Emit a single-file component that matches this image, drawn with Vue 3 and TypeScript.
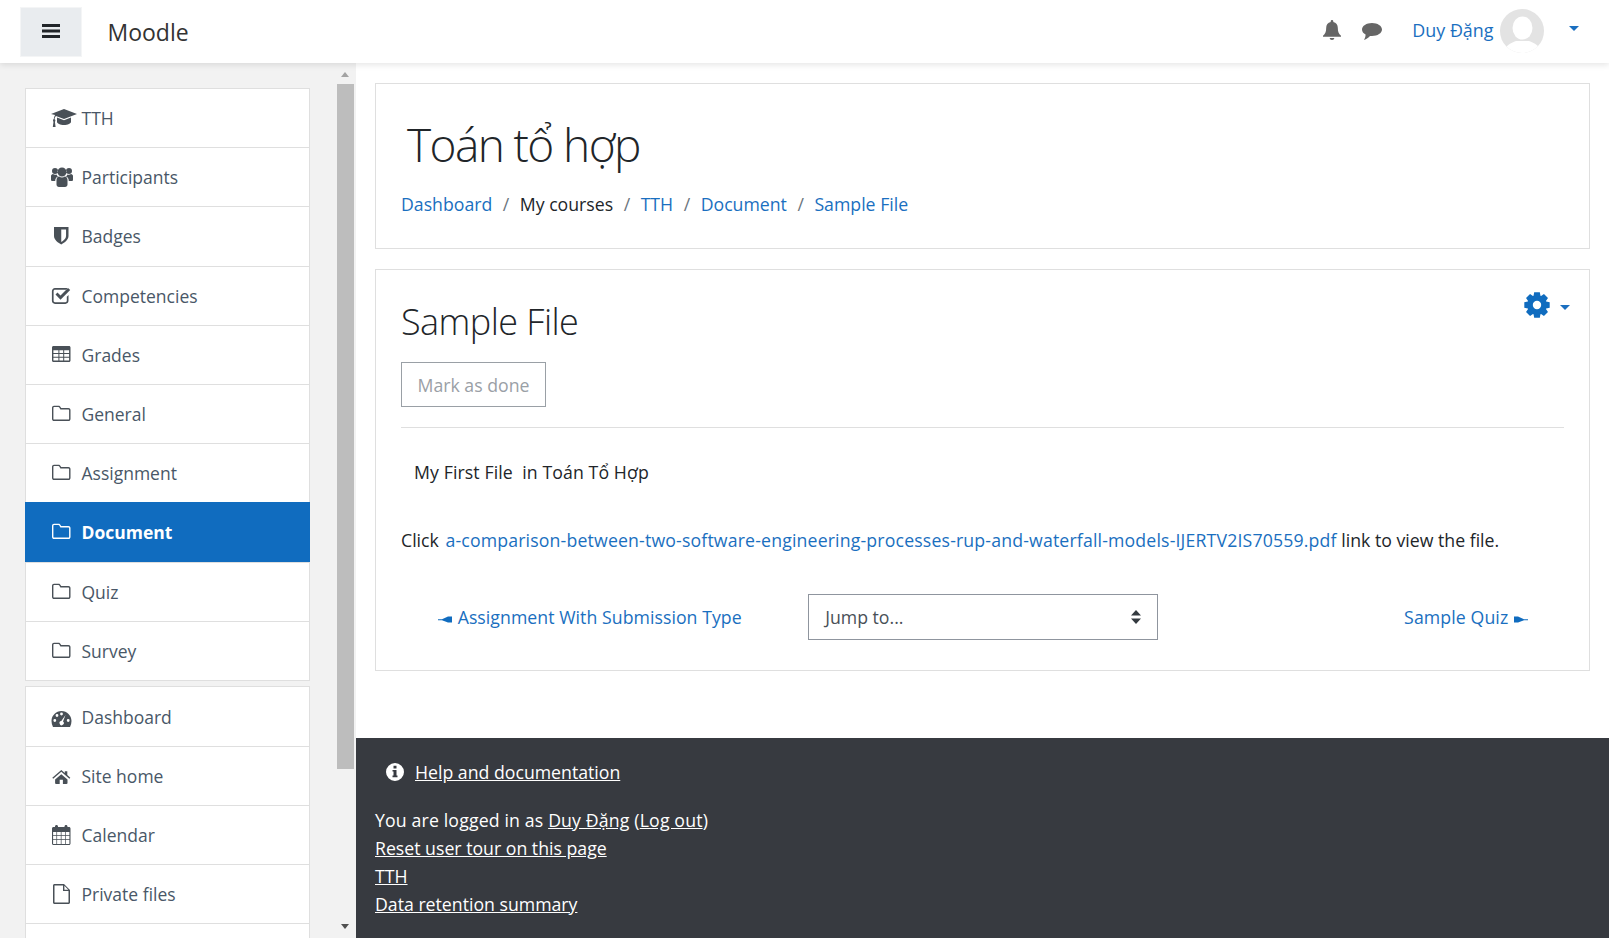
<template>
  <div class="page">
    <header class="navbar">
      <button class="nav-toggle" type="button">
        <svg class="bars" viewBox="0 0 18 14"><path d="M0 0h18v3H0zM0 5.500h18v3H0zM0 11h18v3H0z" /></svg>
      </button>
      <div class="brand">Moodle</div>
      <div class="navbar-right">
        <svg class="bell" viewBox="0 0 18 20"><path d="M9 0c.8 0 1.300.6 1.300 1.300v.6c2.900.6 4.500 3 4.500 5.800 0 4 .9 5.800 3.200 8.100v1H0v-1c2.300-2.300 3.200-4.100 3.200-8.100 0-2.800 1.600-5.200 4.500-5.800v-.6C7.700.6 8.200 0 9 0zM6.700 18h4.600c0 1.200-1 2-2.300 2s-2.300-.8-2.300-2z" /></svg>
        <svg class="chat" viewBox="0 0 20 17"><path d="M10 0c5.500 0 10 2.900 10 6.500S15.500 13 10 13c-.7 0-1.400 0-2-.1C6.500 14.500 4.500 16 2 17c.9-1.300 1.500-3 1.600-5.400C1.400 10.400 0 8.600 0 6.500 0 2.900 4.500 0 10 0z" /></svg>
        <span class="user-name">Duy Đặng</span>
        <svg class="avatar" viewBox="0 0 44 44">
          <defs><clipPath id="avatar-clip"><circle cx="22" cy="22" r="22" /></clipPath></defs>
          <g clip-path="url(#avatar-clip)">
            <rect width="44" height="44" fill="#e3e3e3" />
            <ellipse cx="22.500" cy="19" rx="10" ry="11.500" fill="#fff" />
            <path d="M3 44c1-7 8-10 13-12h13c5 2 12 5 13 12z" fill="#fff" />
          </g>
        </svg>
        <span class="caret user-caret"></span>
      </div>
    </header>

    <div class="layout">
      <aside class="drawer">
        <div class="drawer-lists">
          <nav v-for="(group, groupIndex) in navGroups" :key="groupIndex" class="list-group">
            <div v-for="item in group" :key="item.label" class="list-item" :class="{ active: item.active }">
              <svg v-if="item.icon" class="item-icon" viewBox="0 0 26 26"><path fill-rule="evenodd" :d="icons[item.icon]" /></svg>
              <span>{{ item.label }}</span>
            </div>
          </nav>
        </div>
        <div class="rail">
          <span class="rail-arrow up"></span>
          <div class="rail-thumb"></div>
          <span class="rail-arrow down"></span>
        </div>
      </aside>

      <main class="main">
        <section class="card head-card">
          <h1>Toán tổ hợp</h1>
          <ol class="crumbs">
            <li><a>Dashboard</a></li>
            <li class="sep">/</li>
            <li>My courses</li>
            <li class="sep">/</li>
            <li><a>TTH</a></li>
            <li class="sep">/</li>
            <li><a>Document</a></li>
            <li class="sep">/</li>
            <li><a>Sample File</a></li>
          </ol>
        </section>

        <section class="card content-card">
          <div class="action-menu">
            <svg class="gear" viewBox="0 0 26 26"><path fill-rule="evenodd" :d="gearPath" /></svg>
            <span class="caret"></span>
          </div>
          <h2>Sample File</h2>
          <button class="done-btn" type="button">Mark as done</button>
          <hr />
          <p class="intro">My First File&nbsp; in Toán Tổ Hợp</p>
          <p class="file-line">Click <a class="file-link">a-comparison-between-two-software-engineering-processes-rup-and-waterfall-models-IJERTV2IS70559.pdf</a> link to view the file.</p>
          <div class="jump-row">
            <a class="prev-link">
              <svg class="flag" viewBox="0 0 15 9"><path d="M0 4.200h4L10 1.500h4v6h-4L4 5.200H0z" /></svg>
              Assignment With Submission Type
            </a>
            <div class="jump-cell">
              <div class="jump-select">
                <span>Jump to...</span>
                <svg class="updown" viewBox="0 0 10 14"><path d="M5 0 10 5.500H0zM0 8.500h10L5 14z" /></svg>
              </div>
            </div>
            <a class="next-link">
              Sample Quiz
              <svg class="flag" viewBox="0 0 15 9"><path d="M15 4.200h-4L5 1.500H1v6h4l6-2.300h4z" /></svg>
            </a>
          </div>
        </section>

        <footer class="footer">
          <div class="help">
            <svg class="info" viewBox="0 0 18 18"><path fill-rule="evenodd" d="M9 0a9 9 0 1 1 0 18A9 9 0 0 1 9 0zM7.500 2.800v2.600h3V2.800zM6.500 7v1.600h1v4H6.500v1.600h5v-1.600h-1V7z" /></svg>
            <a>Help and documentation</a>
          </div>
          <div class="login-info">
            <div class="logged-in">You are logged in as <a>Duy Đặng</a> (<a>Log out</a>)</div>
            <div><a>Reset user tour on this page</a></div>
            <div><a>TTH</a></div>
            <div><a>Data retention summary</a></div>
          </div>
        </footer>
      </main>
    </div>
  </div>
</template>

<script setup lang="ts">
type NavItem = { label: string; icon?: string; active?: boolean };

function circle(cx: number, cy: number, r: number) {
  return `M${cx - r} ${cy}a${r} ${r} 0 1 0 ${2 * r} 0a${r} ${r} 0 1 0 ${-2 * r} 0z`;
}

function rect(x0: number, y0: number, x1: number, y1: number) {
  return `M${x0} ${y0}H${x1}V${y1}H${x0}z`;
}

function grid(cols: number[][], rows: number[][]) {
  return cols.flatMap((c) => rows.map((r) => rect(c[0], r[0], c[1], r[1]))).join('');
}

function makeGear() {
  const cx = 13;
  const cy = 13;
  const teeth = 8;
  let d = '';
  for (let i = 0; i < teeth; i++) {
    const a = (i * Math.PI * 2) / teeth - Math.PI / 2;
    const pts = [
      [a - 0.36, 9.8],
      [a - 0.22, 13],
      [a + 0.22, 13],
      [a + 0.36, 9.8],
    ];
    for (const [t, r] of pts) {
      d += `${d ? 'L' : 'M'}${(cx + Math.cos(t) * r).toFixed(2)} ${(cy + Math.sin(t) * r).toFixed(2)}`;
    }
  }
  return d + 'z' + circle(13, 13, 4.2);
}

const gearPath = makeGear();

const folder =
  'M3 4.700h4.500c1 0 1.500.5 2 1.200l.7 1.100h7.300c1.100 0 2 .9 2 2v8.900c0 1.200-.9 2.100-2 2.100H3c-1.100 0-2-.9-2-2.100V6.700c0-1.100.9-2 2-2z' +
  'M3 6.100c-.3 0-.6.3-.6.6v11.200c0 .4.3.7.6.7h14.500c.3 0 .6-.3.6-.7V9c0-.3-.3-.6-.6-.6H9.400L8.300 6.600c-.2-.3-.5-.5-.8-.5z';

const icons: Record<string, string> = {
  cap:
    'M13 4 26 9 13 14 5 11c-1 .8-1.300 2-1.400 3.200.5.3.8.8.8 1.300 0 .5-.2.9-.5 1.200l.7 5.300H1.800l.7-5.300c-.3-.3-.5-.7-.5-1.200 0-.6.3-1.100.8-1.400.1-1.500.5-3 1.300-4.100L0 9z' +
    'M6 12.500l7 2.700 7-2.700v4.300c0 1.900-3.200 3.200-7 3.200s-7-1.300-7-3.200z',
  users:
    circle(11, 8, 4.5) + circle(4, 7, 3) + circle(18, 7, 3) +
    'M5.500 16c0-2 1.200-3.500 2.700-3.500.8.7 1.700 1 2.800 1s2-.3 2.800-1c1.500 0 2.700 1.500 2.700 3.500v4.500c0 1.600-1 2.500-2.500 2.500H8c-1.500 0-2.500-.9-2.500-2.500z' +
    'M0 12c0-1 1-2 2-2 .6.5 1.300.8 2.200.8.5 0 1-.1 1.400-.3.3 1 .8 1.400 1.500 2-1.700.5-2.900 2-2.900 4.500H1.500C.5 17 0 16.500 0 15.500z' +
    'M22 12c0-1-1-2-2-2-.6.5-1.300.8-2.200.8-.5 0-1-.1-1.400-.3-.3 1-.8 1.400-1.500 2 1.700.5 2.900 2 2.900 4.500h2.700c1 0 1.500-.5 1.500-1.500z',
  shield: 'M3 4h14.500v9c0 4-4.500 7-7.250 8.500C7.500 20 3 17 3 13zM10.250 6.500v12.500c2-1.200 4.800-3.200 4.800-6V6.500z',
  check:
    'M4 5h11c.5 0 1 .1 1.400.3l-1.400 1.500H4c-.8 0-1.400.6-1.400 1.400v9.600c0 .8.6 1.400 1.400 1.400h10.400c.8 0 1.400-.6 1.400-1.400v-4l1.700-1.700v5.700c0 1.700-1.400 3.100-3.100 3.100H4c-1.700 0-3.100-1.400-3.100-3.100V8.100C.9 6.400 2.300 5 4 5z' +
    'M4.500 11.500l2-2 3 3 7.500-7.500 2.200 2-9.700 9.700z',
  table:
    'M2.500 4h15.500c.9 0 1.500.6 1.500 1.500v13c0 .9-.6 1.500-1.500 1.500H2.500c-.9 0-1.500-.6-1.500-1.500v-13C1 4.600 1.600 4 2.500 4z' +
    grid([[2.4, 7.4], [8.4, 12.2], [13.2, 18.1]], [[8.2, 10.9], [12, 14.7], [15.8, 18.6]]),
  folder,
  gauge:
    'M10.500 7C16 7 20.500 11.500 20.500 17c0 2-.5 4-1.500 6H2C1 21 .5 19 .5 17 .5 11.500 5 7 10.500 7z' +
    circle(3.8, 16.500, 1.4) + circle(6, 11.500, 1.4) + circle(10.500, 10, 1.4) + circle(17.200, 16.500, 1.4) +
    'M14.500 11l-2.500 6.500a2.100 2.100 0 1 1-1.700-.5z',
  home:
    'M10.300 7 13.800 10V8.200h2.500v3.900l3 2.600-.9 1-8.100-6.900-8.100 6.900-.9-1z' +
    'M10.300 11.300l6.200 5.200v3.600c0 .5-.4.9-.9.9h-3.700v-4.200H8.700V21H5c-.5 0-.9-.4-.9-.9v-3.600z',
  calendar:
    'M2.500 5H4V4.500c0-.9.6-1.500 1.500-1.500S7 3.600 7 4.500V5h6.500v-.5c0-.9.6-1.500 1.500-1.500s1.500.6 1.500 1.500V5H18c.9 0 1.500.6 1.500 1.500v15c0 .9-.6 1.500-1.500 1.500H2.500C1.600 23 1 22.400 1 21.500v-15C1 5.600 1.600 5 2.500 5z' +
    grid([[2.1, 5.400], [6.100, 9.800], [10.500, 14.100], [14.800, 18.400]], [[10.100, 13], [13.700, 17], [17.700, 21.900]]),
  file:
    'M3.500 3H13l6 6v12.500c0 .8-.7 1.500-1.500 1.500h-14C2.700 23 2 22.300 2 21.500v-17C2 3.700 2.700 3 3.500 3z' +
    'M3.500 4.500v17h14V10H12V4.500zM13.400 4.800V8.700h3.900z',
};

const navGroups: NavItem[][] = [
  [
    { label: 'TTH', icon: 'cap' },
    { label: 'Participants', icon: 'users' },
    { label: 'Badges', icon: 'shield' },
    { label: 'Competencies', icon: 'check' },
    { label: 'Grades', icon: 'table' },
    { label: 'General', icon: 'folder' },
    { label: 'Assignment', icon: 'folder' },
    { label: 'Document', icon: 'folder', active: true },
    { label: 'Quiz', icon: 'folder' },
    { label: 'Survey', icon: 'folder' },
  ],
  [
    { label: 'Dashboard', icon: 'gauge' },
    { label: 'Site home', icon: 'home' },
    { label: 'Calendar', icon: 'calendar' },
    { label: 'Private files', icon: 'file' },
    { label: '' },
  ],
];
</script>

<style>
html,
body {
  margin: 0;
  overflow: hidden;
}
</style>

<style scoped>
.page {
  width: 1609px;
  height: 938px;
  overflow: hidden;
  display: flex;
  flex-direction: column;
  font-family: "Open Sans", "Noto Sans", sans-serif;
  font-size: 17.7px;
  color: #212529;
  background: #fff;
}

a {
  color: #1a6fc0;
}

.navbar {
  flex: 0 0 63px;
  display: flex;
  align-items: center;
  padding-left: 20px;
  background: #fff;
  box-shadow: 0 2px 6px rgba(0, 0, 0, 0.1);
  position: relative;
  z-index: 2;
}

.nav-toggle {
  width: 62px;
  height: 50px;
  border: 1px solid #f4f5f6;
  background: #e9ecef;
  display: flex;
  align-items: center;
  justify-content: center;
  padding: 0;
}

.bars {
  width: 18px;
  height: 14px;
  fill: #212529;
  margin-top: -1px;
}

.brand {
  margin-left: 25.500px;
  font-size: 23px;
  color: #333;
}

.navbar-right {
  margin-left: auto;
  display: flex;
  align-items: center;
  padding-right: 30px;
  height: 100%;
}

.bell {
  width: 18px;
  height: 20px;
  fill: #666;
  margin-top: -3px;
}

.chat {
  width: 20px;
  height: 17px;
  fill: #666;
  margin-left: 21px;
}

.user-name {
  margin-left: 30px;
  color: #1a6fc0;
  font-size: 17.9px;
  margin-top: -4px;
}

.avatar {
  width: 44px;
  height: 44px;
  margin-left: 6px;
  margin-top: -2px;
}

.caret {
  display: inline-block;
  width: 0;
  height: 0;
  border-left: 5.500px solid transparent;
  border-right: 5.500px solid transparent;
  border-top: 5.500px solid #1a6fc0;
}

.user-caret {
  margin-left: 25.500px;
  margin-top: -6px;
}

.layout {
  flex: 1 1 0;
  min-height: 0;
  display: flex;
}

.drawer {
  flex: 0 0 356px;
  background: #f2f2f2;
  display: flex;
  overflow: hidden;
}

.drawer-lists {
  width: 285px;
  margin-left: 25px;
  padding-top: 25px;
  display: flex;
  flex-direction: column;
  gap: 5.500px;
}

.list-group {
  background: #fff;
  border: 1px solid #dfdfdf;
}

.list-item {
  height: 59.200px;
  box-sizing: border-box;
  display: flex;
  align-items: center;
  padding-left: 25px;
  font-size: 17.5px;
  color: #495767;
  border-top: 1px solid #dfdfdf;
}

.list-item:first-child {
  height: 58.200px;
  border-top: 0;
}

.list-group + .list-group .list-item:first-child {
  padding-top: 1.500px;
}

.list-item.active {
  background: #106cbf;
  color: #fff;
  font-weight: 700;
  margin: 0 -1px;
  padding-left: 26px;
  padding-top: 1px;
  border-top: 0;
}

.item-icon {
  flex: 0 0 26px;
  width: 26px;
  height: 26px;
  margin-right: 4.500px;
  fill: #495057;
  overflow: visible;
}

.list-item.active .item-icon {
  fill: #fff;
}

.rail {
  width: 17px;
  margin-left: 26.500px;
  display: flex;
  flex-direction: column;
  align-items: center;
  position: relative;
}

.rail-thumb {
  position: absolute;
  top: 21px;
  left: 0;
  width: 17px;
  height: 685px;
  background: #bdbdbd;
}

.rail-arrow {
  position: absolute;
  left: 4px;
  width: 0;
  height: 0;
  border-left: 4.500px solid transparent;
  border-right: 4.500px solid transparent;
}

.rail-arrow.up {
  top: 9px;
  border-bottom: 5px solid #a3a3a3;
}

.rail-arrow.down {
  top: 861px;
  border-top: 5px solid #505050;
}

.main {
  flex: 1 1 0;
  min-width: 0;
  display: flex;
  flex-direction: column;
  padding-top: 20px;
}

.card {
  margin: 0 19px 0 19px;
  border: 1px solid #dfdfdf;
  box-sizing: border-box;
}

.head-card {
  height: 166px;
  padding: 30px 25px 0;
}

h1 {
  margin: 0 0 0 6px;
  font-size: 46px;
  font-weight: 300;
  letter-spacing: -1.600px;
  line-height: 60px;
  color: #212529;
}

.crumbs {
  list-style: none;
  display: flex;
  margin: 16px 0 0;
  padding: 0;
  line-height: 28px;
}

.sep {
  margin: 0 10.500px;
  color: #6c757d;
}

.content-card {
  position: relative;
  margin-top: 20px;
  height: 402px;
  padding: 29px 25px 0;
}

.action-menu {
  position: absolute;
  top: 22px;
  right: 19px;
  display: flex;
  align-items: center;
}

.gear {
  width: 26px;
  height: 26px;
  fill: #106cbf;
  margin-right: 10px;
}

.action-menu .caret {
  margin-top: 5px;
}

h2 {
  margin: 0;
  font-size: 36px;
  font-weight: 300;
  letter-spacing: -0.550px;
  line-height: 46px;
  color: #212529;
}

.done-btn {
  display: block;
  margin: 17px 0 0;
  width: 145px;
  height: 45px;
  padding: 0;
  background: #fff;
  border: 1px solid #9aa0a6;
  color: #9aa0a6;
  font: inherit;
}

hr {
  margin: 20px 0 0;
  border: 0;
  border-top: 1px solid #dfdfdf;
}

.intro {
  margin: 30px 0 0 13px;
  line-height: 28px;
  letter-spacing: 0.100px;
}

.file-line {
  margin: 40px 0 0;
  line-height: 28px;
  white-space: nowrap;
}

.file-link {
  margin-left: 2px;
  letter-spacing: 0.160px;
}

.jump-row {
  margin-top: 40px;
  display: grid;
  grid-template-columns: 1fr 1fr 1fr;
  align-items: center;
}

.prev-link {
  padding-left: 37px;
  white-space: nowrap;
  letter-spacing: 0.050px;
}

.next-link {
  text-align: right;
  padding-right: 36px;
  letter-spacing: 0.100px;
}

.flag {
  width: 15px;
  height: 9px;
  fill: #106cbf;
}

.jump-cell {
  padding: 0 18.500px 0 19.500px;
}

.jump-select {
  height: 46px;
  box-sizing: border-box;
  border: 1px solid #8f959e;
  display: flex;
  align-items: center;
  justify-content: space-between;
  padding: 0 16px;
  color: #495057;
}

.updown {
  width: 10px;
  height: 14px;
  fill: #343a40;
}

.footer {
  margin-top: 67px;
  flex: 1 1 0;
  background: #373a40;
  color: #fff;
  padding: 20px 19px 0;
}

.footer a {
  color: #fff;
  text-decoration: underline;
}

.help {
  display: flex;
  align-items: center;
  padding-left: 11px;
  line-height: 28px;
}

.info {
  width: 18px;
  height: 18px;
  fill: #fff;
  margin-right: 11px;
}

.login-info {
  margin-top: 20px;
  line-height: 28px;
}

.logged-in {
  letter-spacing: 0.150px;
}
</style>
